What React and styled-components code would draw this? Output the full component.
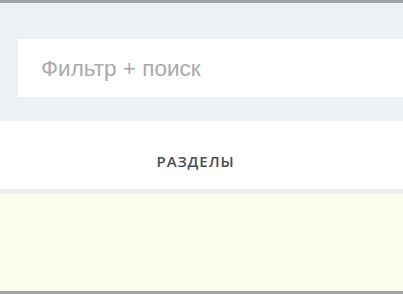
import React from 'react';
import styled, { createGlobalStyle } from 'styled-components';

const GlobalStyle = createGlobalStyle`
  html, body {
    margin: 0;
    padding: 0;
    background: #fbfeef;
  }
  body {
    font-family: "Liberation Sans", Arial, sans-serif;
  }
`;

function App() {
  return (
    <>
      <GlobalStyle />
      <Page>
        <Edge />
        <FilterBar>
          <SearchInput type="text" placeholder="Фильтр + поиск" />
        </FilterBar>
        <SectionsTab>Разделы</SectionsTab>
        <Divider />
        <Content />
        <Edge />
      </Page>
    </>
  );
}

const Page = styled.div`
  display: flex;
  flex-direction: column;
  width: 403px;
  height: 294px;
  overflow: hidden;
`;

const Edge = styled.div`
  height: 3px;
  flex-shrink: 0;
  background-color: #a3a4a6;
`;

const FilterBar = styled.div`
  height: 118px;
  box-sizing: border-box;
  padding: 36px 0 24px 18px;
  background-color: #edf0f4;
`;

const SearchInput = styled.input`
  display: block;
  width: 420px;
  height: 58px;
  box-sizing: border-box;
  border: none;
  outline: none;
  padding: 2px 0 0 23px;
  background: #fff;
  font-family: "Liberation Sans", Arial, sans-serif;
  font-size: 22.5px;
  color: #333;

  &::placeholder {
    color: #a9aaac;
  }
`;

const SectionsTab = styled.div`
  height: 68px;
  box-sizing: border-box;
  display: flex;
  align-items: center;
  justify-content: center;
  padding: 12px 12px 0 0;
  background-color: #fff;
  font-family: "Open Sans", sans-serif;
  font-weight: 600;
  font-size: 15px;
  letter-spacing: 0.9px;
  text-transform: uppercase;
  color: #4a4d52;
`;

const Divider = styled.div`
  height: 5px;
  background-color: #eceef1;
`;

const Content = styled.div`
  flex: 1;
  background-color: #fbfeef;
`;

export default App;
